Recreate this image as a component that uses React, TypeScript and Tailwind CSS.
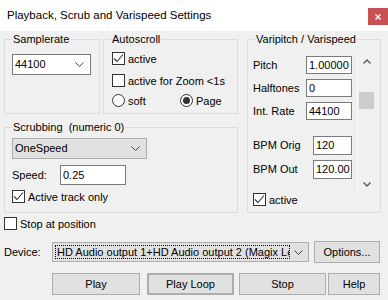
import React from "react";

type Kids = { children?: React.ReactNode; className?: string };

const Group = ({ title, className, children }: Kids & { title: string }) => (
  <div className={`relative border border-[#dcdcdc] ${className ?? ""}`}>
    <span className="absolute left-[7px] -top-[8px] bg-[#f0f0f0] px-[1px] leading-[14px] whitespace-pre">
      {title}
    </span>
    {children}
  </div>
);

const CheckBox = ({ checked, label }: { checked?: boolean; label: string }) => (
  <div className="flex items-center h-[13px] gap-[3px] whitespace-nowrap">
    <span className="w-[13px] h-[13px] border border-[#333333] bg-white shrink-0 flex items-center justify-center">
      {checked && (
        <svg width="11" height="11" viewBox="0 0 11 11">
          <path d="M1 5.5 L4 8.5 L10 1.5" fill="none" stroke="#333333" strokeWidth="1.1" />
        </svg>
      )}
    </span>
    <span className="leading-[14px]">{label}</span>
  </div>
);

const Radio = ({ checked, label }: { checked?: boolean; label: string }) => (
  <div className="flex items-center h-[13px] gap-[3px]">
    <span className="w-[13px] h-[13px] rounded-full border border-[#333333] bg-white flex items-center justify-center">
      {checked && <span className="w-[7px] h-[7px] rounded-full bg-[#333333]" />}
    </span>
    <span className="leading-[14px]">{label}</span>
  </div>
);

const Chevron = () => (
  <svg width="9" height="5" viewBox="0 0 9 5">
    <path d="M0.5 0.5 L4.5 4.5 L8.5 0.5" fill="none" stroke="#444444" strokeWidth="1" />
  </svg>
);

const TextBox = ({ value, className }: { value: string; className?: string }) => (
  <div
    className={`border border-[#7a7a7a] bg-white pl-[2px] flex items-center overflow-hidden whitespace-nowrap ${className ?? ""}`}
  >
    {value}
  </div>
);

const Button = ({ label, className }: { label: string; className?: string }) => (
  <div className={`h-[22px] bg-[#e1e1e1] border border-[#adadad] flex items-center justify-center ${className ?? ""}`}>
    {label}
  </div>
);

export default function App() {
  return (
    <div className="w-[388px] h-[300px] overflow-hidden bg-[#f0f0f0] text-black text-[11px] font-['Liberation_Sans',Arial,sans-serif]">
      {/* title bar */}
      <div className="h-[31px] bg-white flex justify-between">
        <div className="pl-[7px] pt-[8px] text-[11.5px] leading-[14px]">
          Playback, Scrub and Varispeed Settings
        </div>
        <div className="mt-[8px] w-[20px] h-[17px] bg-[#c75050] flex items-center justify-center">
          <svg width="6" height="6" viewBox="0 0 6 6">
            <path d="M0.5 0.5 L5.5 5.5 M5.5 0.5 L0.5 5.5" stroke="#ffffff" strokeWidth="1.4" />
          </svg>
        </div>
      </div>

      <div className="px-[4px]">
        <div className="flex mt-[8px] gap-[9px]">
          {/* left column */}
          <div className="w-[234px] flex flex-col gap-[13px]">
            <div className="flex gap-[3px]">
              <Group title="Samplerate" className="w-[96px] h-[75px] pl-[7px] pt-[14px]">
                <div className="w-[79px] h-[21px] bg-white border border-[#7a7a7a] flex items-center justify-between pl-[2px] pr-[6px]">
                  <span>44100</span>
                  <Chevron />
                </div>
              </Group>
              <Group title="Autoscroll" className="w-[135px] h-[75px] pl-[8px] pt-[12px]">
                <CheckBox checked label="active" />
                <div className="mt-[9px]">
                  <CheckBox label="active for Zoom <1s" />
                </div>
                <div className="mt-[7px] flex">
                  <div className="w-[68px]">
                    <Radio label="soft" />
                  </div>
                  <Radio checked label="Page" />
                </div>
              </Group>
            </div>
            <Group title="Scrubbing  (numeric 0)" className="h-[86px] pl-[7px] pt-[10px]">
              <div className="w-[135px] h-[21px] bg-[#e1e1e1] border border-[#adadad] flex items-center justify-between pl-[2px] pr-[6px]">
                <span>OneSpeed</span>
                <Chevron />
              </div>
              <div className="mt-[6px] flex items-center h-[20px]">
                <span className="w-[48px]">Speed:</span>
                <TextBox value="0.25" className="w-[66px] h-[20px]" />
              </div>
              <div className="mt-[5px]">
                <CheckBox checked label="Active track only" />
              </div>
            </Group>
          </div>

          {/* right column */}
          <Group title="Varipitch / Varispeed" className="w-[134px] h-[174px] pr-[5px] pt-[13px]">
            <div className="flex h-[140px]">
              <div className="w-[109px] pl-[5px] pt-[3px] flex flex-col gap-[5px]">
                <div className="flex items-center h-[18px]">
                  <span className="w-[53px]">Pitch</span>
                  <TextBox value="1.00000" className="w-[46px] h-[18px]" />
                </div>
                <div className="flex items-center h-[18px]">
                  <span className="w-[53px]">Halftones</span>
                  <TextBox value="0" className="w-[46px] h-[18px]" />
                </div>
                <div className="flex items-center h-[18px]">
                  <span className="w-[53px]">Int. Rate</span>
                  <TextBox value="44100" className="w-[46px] h-[18px]" />
                </div>
                <div className="flex items-center h-[19px] mt-[11px]">
                  <span className="w-[60px]">BPM Orig</span>
                  <TextBox value="120" className="w-[39px] h-[19px]" />
                </div>
                <div className="flex items-center h-[19px]">
                  <span className="w-[60px]">BPM Out</span>
                  <TextBox value="120.00" className="w-[39px] h-[19px]" />
                </div>
              </div>
              {/* scrollbar */}
              <div className="w-[18px] border-l border-[#fafafa] flex flex-col">
                <div className="h-[17px] flex items-center justify-center">
                  <svg width="8" height="5" viewBox="0 0 8 5">
                    <path d="M0.5 4.5 L4 1 L7.5 4.5" fill="none" stroke="#606060" strokeWidth="1.5" />
                  </svg>
                </div>
                <div className="mt-[22px] ml-[1px] w-[15px] h-[17px] bg-[#cdcdcd]" />
                <div className="flex-1" />
                <div className="h-[17px] flex items-center justify-center">
                  <svg width="8" height="5" viewBox="0 0 8 5">
                    <path d="M0.5 0.5 L4 4 L7.5 0.5" fill="none" stroke="#606060" strokeWidth="1.5" />
                  </svg>
                </div>
              </div>
            </div>
            <div className="pl-[5px]">
              <CheckBox checked label="active" />
            </div>
          </Group>
        </div>

        <div className="mt-[4px]">
          <CheckBox label="Stop at position" />
        </div>

        <div className="mt-[12px] flex items-center h-[20px]">
          <span className="w-[48px]">Device:</span>
          <div className="w-[257px] h-[20px] bg-[#e1e1e1] border border-[#adadad] flex p-[2px]">
            <div className="w-[235px] border border-dotted border-black pl-[1px] flex items-center overflow-hidden whitespace-nowrap">
              HD Audio output 1+HD Audio output 2 (Magix Low
            </div>
            <div className="flex-1 flex items-center justify-center">
              <Chevron />
            </div>
          </div>
          <Button label="Options..." className="ml-[5px] w-[66px] h-[21px]" />
        </div>

        <div className="mt-[11px] flex">
          <Button label="Play" className="ml-[48px] w-[88px]" />
          <Button label="Play Loop" className="ml-[7px] w-[87px] border-2 border-[#0078d7]" />
          <Button label="Stop" className="ml-[5px] w-[87px]" />
          <Button label="Help" className="ml-[2px] w-[52px]" />
        </div>
      </div>
    </div>
  );
}
